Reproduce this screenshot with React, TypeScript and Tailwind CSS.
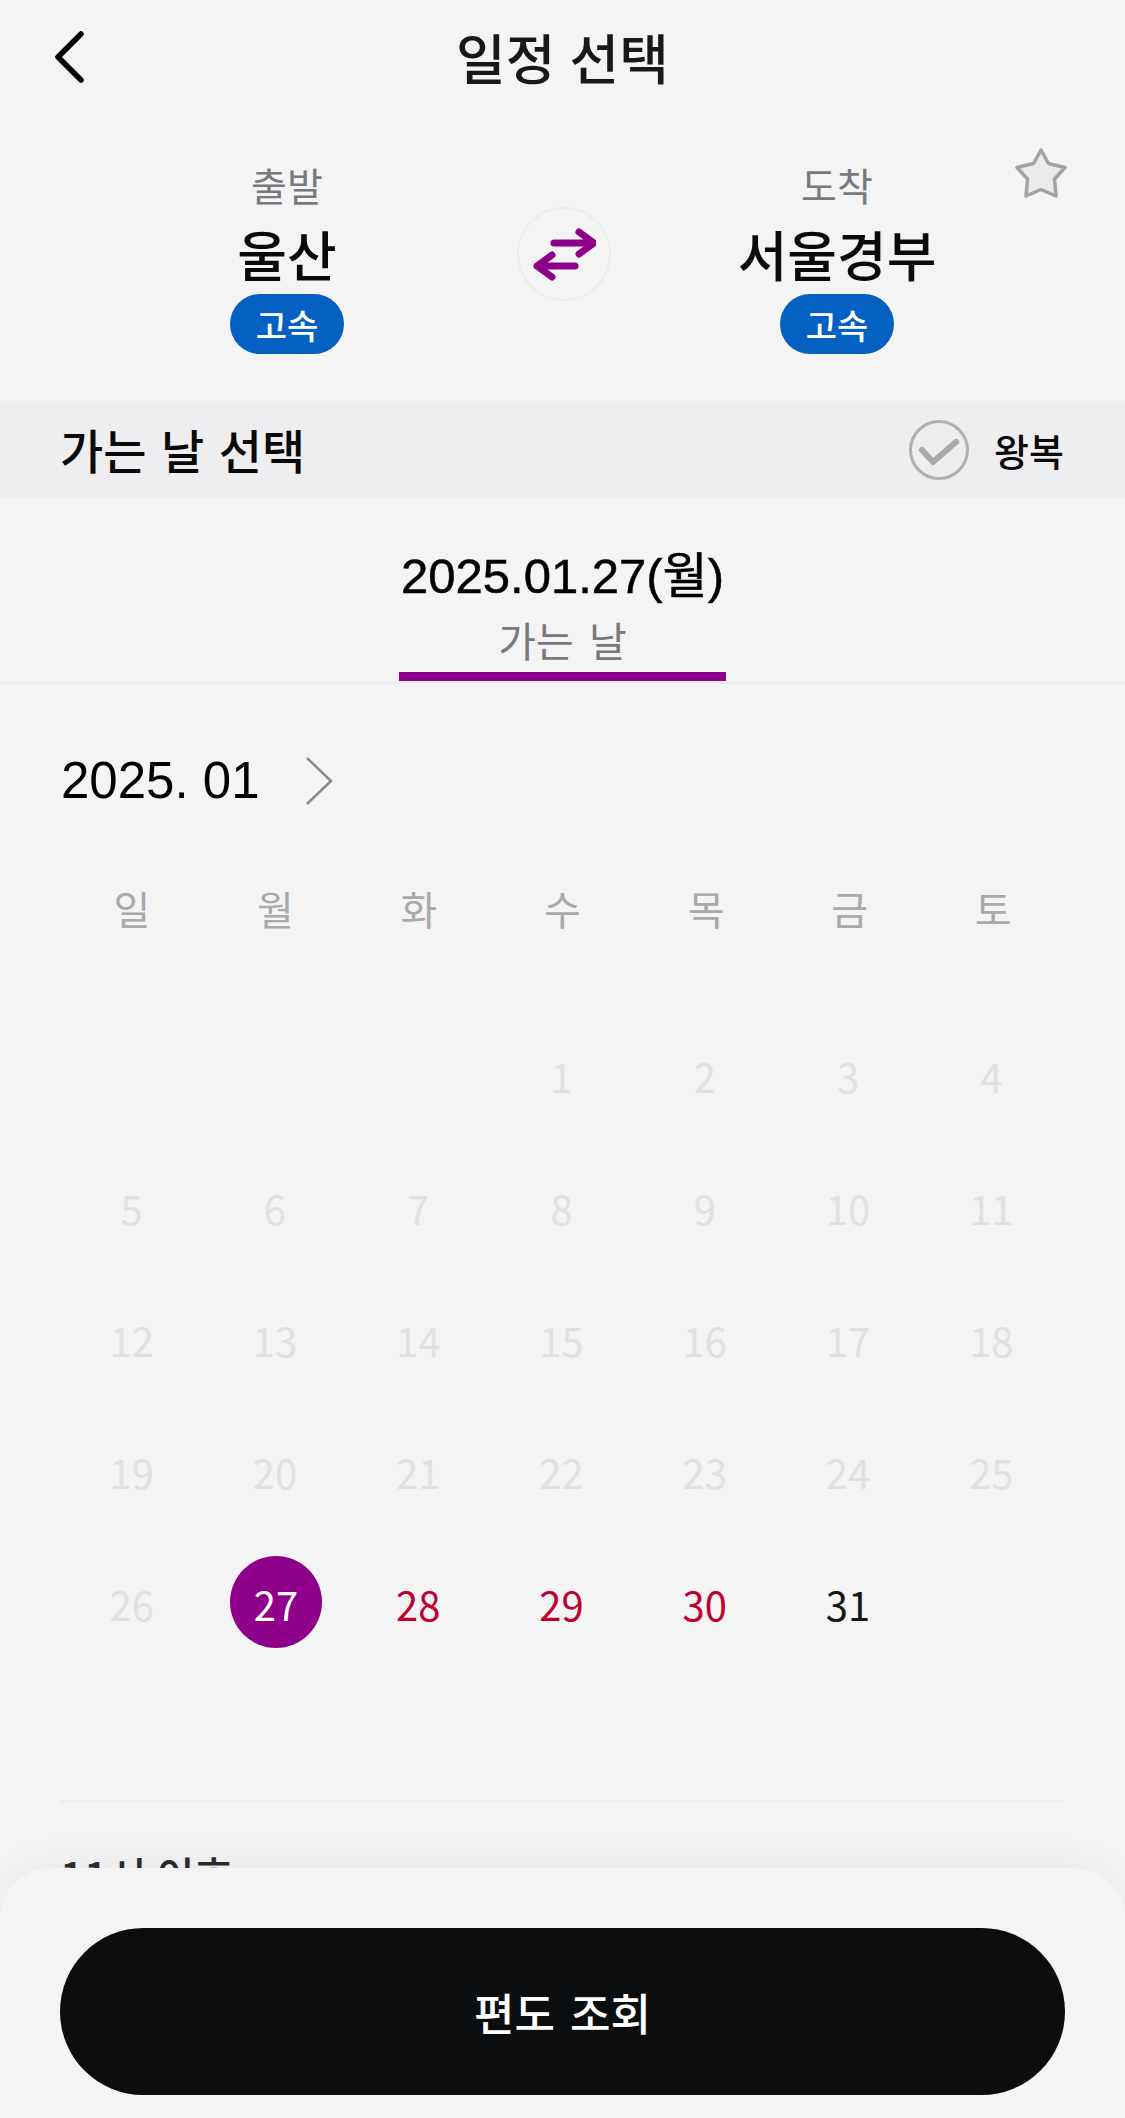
const weekdays = ['일', '월', '화', '수', '목', '금', '토'];

const past = [
  '', '', '', '1', '2', '3', '4',
  '5', '6', '7', '8', '9', '10', '11',
  '12', '13', '14', '15', '16', '17', '18',
  '19', '20', '21', '22', '23', '24', '25',
];

function Terminal({ label, name }: { label: string; name: string }): React.ReactElement {
  return (
    <div className="flex w-[320px] flex-col items-center">
      <div className="h-[44px] text-[39px] leading-[44px] text-[#77797c]">{label}</div>
      <div className="mt-[18px] h-[60px] text-[54px] leading-[60px] font-medium text-[#0a0a0a]">{name}</div>
      <div className="mt-[10px] flex h-[60px] w-[114px] items-center justify-center rounded-full bg-[#0461c2] text-[34px] font-medium text-white">
        고속
      </div>
    </div>
  );
}

export default function App(): React.ReactElement {
  return (
    <div className="relative h-[2118px] w-[1125px] overflow-hidden bg-[#f4f4f5] font-['Noto_Sans_CJK_KR',sans-serif]">
      <header className="relative flex h-[120px] items-center justify-center pb-[6px]">
        <svg className="absolute top-[30px] left-[50px]" width="40" height="54" viewBox="0 0 40 54" fill="none">
          <path d="M31 4 L8 27 L31 50" stroke="#000" strokeWidth="5.5" strokeLinecap="round" strokeLinejoin="round" />
        </svg>
        <h1 className="text-[54px] leading-none font-medium text-[#16181a] [word-spacing:2px]">일정 선택</h1>
      </header>

      <section className="relative flex h-[281px] pt-[42px] pl-[127px]">
        <svg className="absolute top-[25px] right-[55px]" width="58" height="58" viewBox="0 0 58 58">
          <path
            d="M29 5 L36.5 18.5 L53 22.5 L42.5 34 L44 51 L29 44.5 L14 51 L15.5 34 L5 22.5 L21.5 18.5 Z"
            fill="#ebebed"
            stroke="#a3a3a5"
            strokeWidth="3.5"
            strokeLinejoin="round"
          />
        </svg>
        <Terminal label="출발" name="울산" />
        <div className="mt-[45px] ml-[70px] flex h-[94px] w-[94px] items-center justify-center rounded-full border-2 border-[#ececee]">
          <svg width="64" height="54" viewBox="0 0 64 54" fill="none">
            <path
              d="M22 16 H62 M47 5 L62 16 L47 27 M43 39 H5 M20 28 L5 39 L20 50"
              stroke="#8e0089"
              strokeWidth="7"
              strokeLinecap="round"
              strokeLinejoin="round"
            />
          </svg>
        </div>
        <div className="ml-[66px]">
          <Terminal label="도착" name="서울경부" />
        </div>
      </section>

      <section className="flex h-[97px] items-center justify-between bg-[#eeeef0] pr-[61px] pl-[60px]">
        <h2 className="text-[47px] font-medium text-[#0a0a0a] [word-spacing:4px]">가는 날 선택</h2>
        <div className="flex items-center gap-[25px]">
          <svg width="60" height="60" viewBox="0 0 60 60" fill="none">
            <circle cx="30" cy="30" r="28.5" stroke="#b0b0b2" strokeWidth="3" />
            <path d="M13 30 L24 42 L47 22" stroke="#a9a9ab" strokeWidth="6" strokeLinecap="round" strokeLinejoin="round" />
          </svg>
          <span className="text-[38px] font-medium text-[#0a0a0a]">왕복</span>
        </div>
      </section>

      <section className="relative flex h-[186px] flex-col items-center border-b-2 border-[#ececee] pt-[48px]">
        <div className="h-[60px] font-['Liberation_Sans','Noto_Sans_CJK_KR',sans-serif] text-[49px] leading-[60px] text-black [-webkit-text-stroke:0.5px_#000]">
          2025.01.27(월)
        </div>
        <div className="mt-[8px] text-[41px] leading-[50px] text-[#77797c] [word-spacing:6px]">가는 날</div>
        <div className="absolute bottom-px h-[9px] w-[327px] bg-[#8e0089]" />
      </section>

      <section className="px-[60px]">
        <div className="flex h-[194px] items-center gap-[44px] pl-[1px]">
          <span className="font-['Liberation_Sans','Noto_Sans_CJK_KR',sans-serif] text-[51px] text-black">2025. 01</span>
          <svg width="30" height="50" viewBox="0 0 30 50" fill="none">
            <path d="M3 2 L27 25 L3 48" stroke="#8a8a8c" strokeWidth="2.5" />
          </svg>
        </div>
        <div className="grid h-[60px] grid-cols-7 text-center text-[40px] leading-[60px] text-[#a9a9ab]">
          {weekdays.map((day) => (
            <div key={day}>{day}</div>
          ))}
        </div>
        <div className="mt-[72px] grid grid-cols-7 pr-[2px] text-center text-[40px]">
          {past.map((day, i) => (
            <div key={i} className="flex h-[132px] items-center justify-center text-[#e1e1e3]">
              {day}
            </div>
          ))}
          <div className="flex h-[132px] items-center justify-center text-[#e1e1e3]">26</div>
          <div className="flex h-[132px] items-center justify-center">
            <span className="mb-[5px] ml-[2px] flex h-[92px] w-[92px] items-center justify-center rounded-full bg-[#8e0089] pt-[5px] text-white">
              27
            </span>
          </div>
          <div className="flex h-[132px] items-center justify-center text-[#c1002f]">28</div>
          <div className="flex h-[132px] items-center justify-center text-[#c1002f]">29</div>
          <div className="flex h-[132px] items-center justify-center text-[#c1002f]">30</div>
          <div className="flex h-[132px] items-center justify-center text-[#16181a]">31</div>
        </div>
        <div className="mt-[130px] border-t-2 border-[#ececee] pt-[48px] text-[42px] leading-[50px] font-medium text-[#2a2c2e]">
          11시 이후
        </div>
      </section>

      <footer className="absolute right-0 bottom-0 left-0 h-[250px] rounded-t-[50px] bg-[#f4f4f5] px-[60px] pt-[60px] shadow-[0_-4px_40px_rgba(0,0,40,0.05)]">
        <button className="h-[167px] w-full rounded-full bg-[#0b0d0f] text-[44px] font-medium text-white [word-spacing:5px]">편도 조회</button>
      </footer>
    </div>
  );
}
